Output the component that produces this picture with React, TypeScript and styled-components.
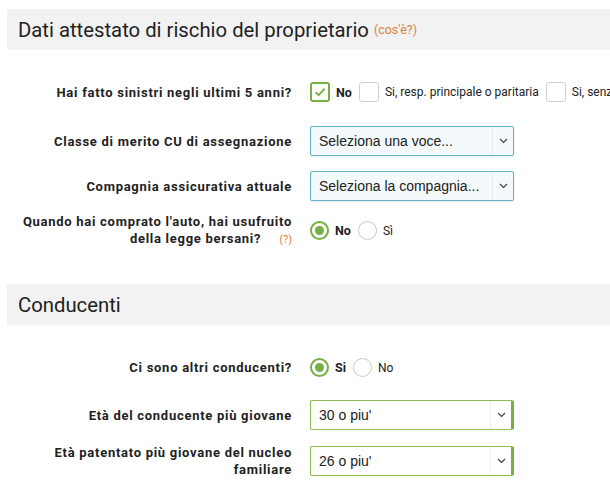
import React from "react";
import styled, { createGlobalStyle } from "styled-components";

const GlobalStyle = createGlobalStyle`
  html, body {
    margin: 0;
    padding: 0;
    background: #ffffff;
    font-family: Roboto, "Noto Sans", sans-serif;
    color: #222;
  }
`;

const GREEN = "#76b043";
const ORANGE = "#e0823f";

type SelectTone = "blue" | "green";

const Page = styled.div`
  padding: 9px 0 0 7px;
  width: 603px;
  overflow: hidden;
`;

const SectionHeader = styled.h2<{ $top?: number }>`
  margin: ${(p) => p.$top || 0}px 0 0 0;
  height: 41px;
  display: flex;
  align-items: center;
  padding-left: 11px;
  background: #f2f2f2;
  font-family: Roboto, sans-serif;
  font-weight: 400;
  font-size: 20.3px;
  color: #222;
  white-space: nowrap;
`;

const Hint = styled.span<{ $size?: number; $gap?: number }>`
  color: ${ORANGE};
  font-size: ${(p) => p.$size || 12.5}px;
  font-weight: 400;
  letter-spacing: 0;
  margin-left: ${(p) => p.$gap || 5}px;
`;

const Row = styled.div<{ $gap: number }>`
  display: grid;
  grid-template-columns: 285px auto;
  column-gap: 18px;
  align-items: center;
  margin-top: ${(p) => p.$gap}px;
`;

const Label = styled.label`
  text-align: right;
  font-family: Roboto, sans-serif;
  font-weight: 700;
  font-size: 13px;
  letter-spacing: 0.72px;
  line-height: 17px;
  color: #222;
`;

const Options = styled.div`
  display: flex;
  align-items: center;
  white-space: nowrap;
`;

const Option = styled.span`
  display: inline-flex;
  align-items: center;
  margin-right: 7px;
`;

const Box = styled.span<{ $checked?: boolean }>`
  box-sizing: border-box;
  width: 20px;
  height: 20px;
  border-radius: 3px;
  border: ${(p) => (p.$checked ? `2px solid ${GREEN}` : "1px solid #cfcfcf")};
  background: #fff;
  display: inline-flex;
  align-items: center;
  justify-content: center;
  margin-right: 6px;
`;

const Radio = styled.span<{ $checked?: boolean }>`
  box-sizing: border-box;
  width: 19px;
  height: 19px;
  border-radius: 50%;
  border: ${(p) => (p.$checked ? `2px solid ${GREEN}` : "1px solid #c8c8c8")};
  background: #fff;
  display: inline-flex;
  align-items: center;
  justify-content: center;
  margin-right: 6px;
  &::after {
    content: "";
    width: 9px;
    height: 9px;
    border-radius: 50%;
    background: ${(p) => (p.$checked ? GREEN : "transparent")};
  }
`;

const OptionText = styled.span<{ $bold?: boolean }>`
  font-family: Roboto, sans-serif;
  font-size: ${(p) => (p.$bold ? 12.5 : 12)}px;
  font-weight: ${(p) => (p.$bold ? 700 : 400)};
  color: #222;
`;

const SelectBox = styled.div<{ $tone: SelectTone }>`
  box-sizing: border-box;
  width: 204px;
  height: 30px;
  display: flex;
  align-items: stretch;
  border-radius: 2px;
  border: 1px solid ${(p) => (p.$tone === "blue" ? "#62b3cc" : "#8cc152")};
  border-right: ${(p) => (p.$tone === "blue" ? "1px solid #62b3cc" : `3px solid ${GREEN}`)};
  background: ${(p) => (p.$tone === "blue" ? "#f4f9fc" : "#ffffff")};
  box-shadow: ${(p) => (p.$tone === "blue" ? "0 1px 2px rgba(0,0,0,0.08)" : "none")};
`;

const SelectValue = styled.span`
  flex: 1;
  display: flex;
  align-items: center;
  padding-left: 8px;
  font-family: "Liberation Sans", Arial, sans-serif;
  font-size: 14px;
  color: #222;
  white-space: nowrap;
`;

const Arrow = styled.span`
  width: 20px;
  display: flex;
  align-items: center;
  justify-content: center;
  border-left: 1px solid #ececec;
`;

const Check = () => (
  <svg width="14" height="14" viewBox="0 0 14 14">
    <path d="M2.5 7.2 L5.7 10.2 L11.5 3.6" fill="none" stroke={GREEN} strokeWidth="1.8" />
  </svg>
);

const Chevron = () => (
  <svg width="9" height="6" viewBox="0 0 9 6">
    <path d="M1 1 L4.5 4.5 L8 1" fill="none" stroke="#444" strokeWidth="1.2" />
  </svg>
);

const Select: React.FC<{ tone: SelectTone; value: string }> = ({ tone, value }) => (
  <SelectBox $tone={tone}>
    <SelectValue>{value}</SelectValue>
    <Arrow>
      <Chevron />
    </Arrow>
  </SelectBox>
);

type Choice = { label: string; checked?: boolean };

const CheckGroup: React.FC<{ items: Choice[] }> = ({ items }) => (
  <Options>
    {items.map((it) => (
      <Option key={it.label}>
        <Box $checked={it.checked}>{it.checked && <Check />}</Box>
        <OptionText $bold={it.checked}>{it.label}</OptionText>
      </Option>
    ))}
  </Options>
);

const RadioGroup: React.FC<{ items: Choice[] }> = ({ items }) => (
  <Options>
    {items.map((it) => (
      <Option key={it.label}>
        <Radio $checked={it.checked} />
        <OptionText $bold={it.checked}>{it.label}</OptionText>
      </Option>
    ))}
  </Options>
);

const App: React.FC = () => {
  return (
    <Page>
      <GlobalStyle />
      <SectionHeader>
        Dati attestato di rischio del proprietario
        <Hint>(cos'è?)</Hint>
      </SectionHeader>

      <Row $gap={32}>
        <Label>Hai fatto sinistri negli ultimi 5 anni?</Label>
        <CheckGroup
          items={[
            { label: "No", checked: true },
            { label: "Si, resp. principale o paritaria" },
            { label: "Si, senza responsabilità" },
          ]}
        />
      </Row>
      <Row $gap={24}>
        <Label>Classe di merito CU di assegnazione</Label>
        <Select tone="blue" value="Seleziona una voce..." />
      </Row>
      <Row $gap={15}>
        <Label>Compagnia assicurativa attuale</Label>
        <Select tone="blue" value="Seleziona la compagnia..." />
      </Row>
      <Row $gap={12}>
        <Label>
          Quando hai comprato l'auto, hai usufruito della legge bersani?
          <Hint $size={11} $gap={18}>(?)</Hint>
        </Label>
        <RadioGroup items={[{ label: "No", checked: true }, { label: "Sì" }]} />
      </Row>

      <SectionHeader $top={36}>Conducenti</SectionHeader>

      <Row $gap={33}>
        <Label>Ci sono altri conducenti?</Label>
        <RadioGroup items={[{ label: "Si", checked: true }, { label: "No" }]} />
      </Row>
      <Row $gap={23}>
        <Label>Età del conducente più giovane</Label>
        <Select tone="green" value="30 o piu'" />
      </Row>
      <Row $gap={14}>
        <Label>Età patentato più giovane del nucleo familiare</Label>
        <Select tone="green" value="26 o piu'" />
      </Row>
    </Page>
  );
};

export default App;
